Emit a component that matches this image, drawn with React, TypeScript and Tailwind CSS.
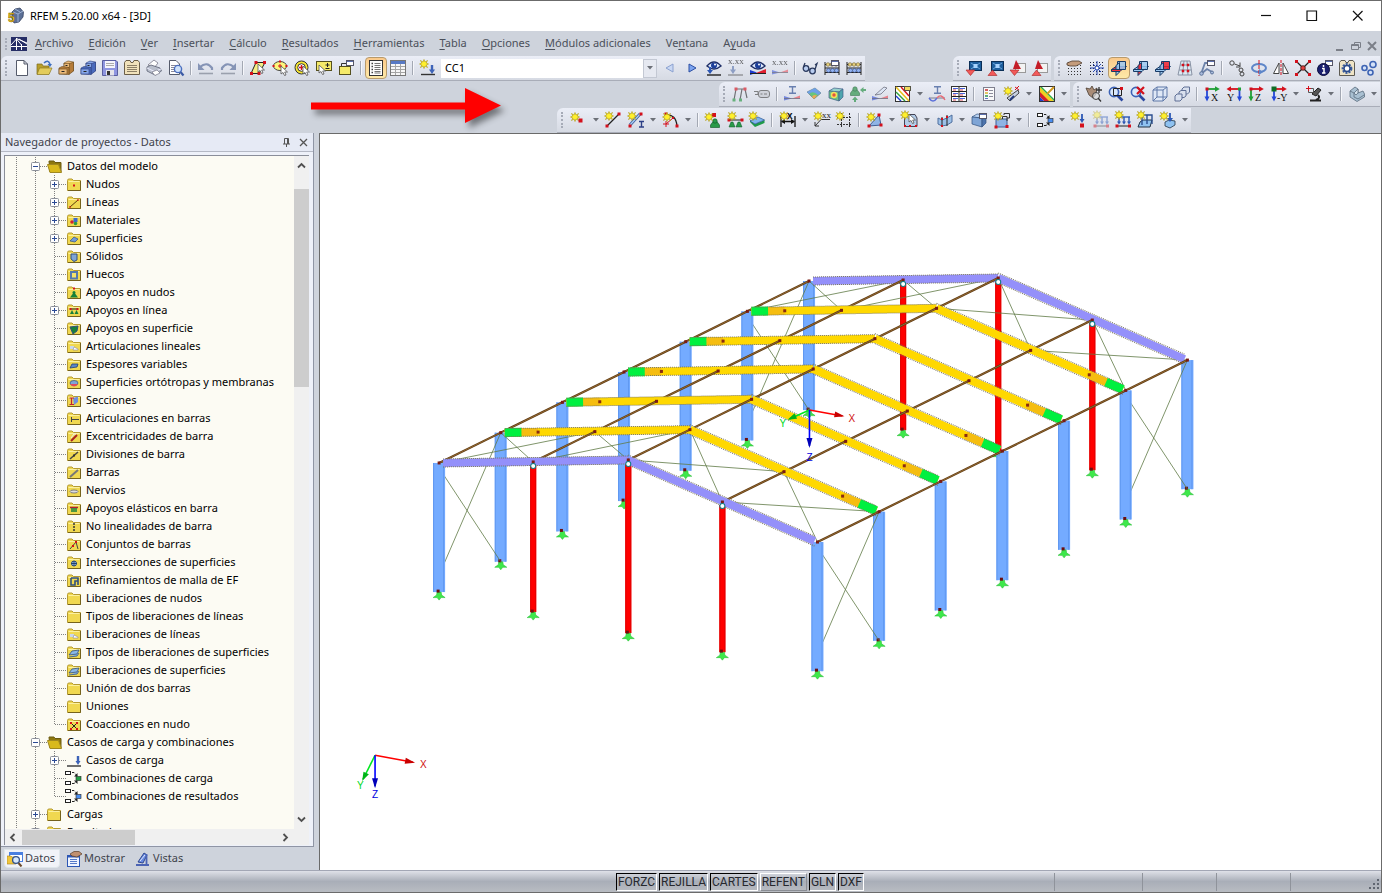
import type { ReactNode } from 'react';

/* ---------- icon parts, all on a 16x16 grid ---------- */

const Star = ({ x = 4, y = 4 }: any) => (
  <path
    transform={`translate(${x} ${y})`}
    d="M0 -4.5L1 -2L3.5 -3.5L2.2 -1L4.5 0L2.2 1L3.5 3.5L1 2L0 4.5L-1 2L-3.5 3.5L-2.2 1L-4.5 0L-2.2 -1L-3.5 -3.5L-1 -2Z"
    fill="#fff02c"
    stroke="#a89410"
    strokeWidth=".6"
  />
);

const Dot = ({ x, y, s = 3, c = '#d4101c' }: any) => (
  <rect x={x - s / 2} y={y - s / 2} width={s} height={s} fill={c} />
);

const Cursor = ({ x = 8, y = 6 }: any) => (
  <path
    transform={`translate(${x} ${y})`}
    d="M0 0V8L2 6.5L3.5 9.5L5 9L3.7 6H6.5Z"
    fill="#fff"
    stroke="#555"
    strokeWidth=".8"
  />
);

const Win = ({ x = 8, y = 0 }: any) => (
  <g transform={`translate(${x} ${y})`}>
    <rect x=".5" y=".5" width="7" height="5" fill="#fff" stroke="#556" />
    <path d="M1 1.5H7" stroke="#5b6fae" />
  </g>
);

const Grid = ({ c = '#333' }: any) => (
  <path
    d="M1 5.5H15M1 8.5H15M1 11.5H15M1 14.5H15M1 2.5H15"
    stroke={c}
    strokeDasharray="1 2"
  />
);

const Support = ({ x = 8, y = 8, c = '#2a9a4a' }: any) => (
  <g transform={`translate(${x} ${y})`}>
    <path d="M-1.500 0H1.500L4.500 4V6.500H-4.500V4Z" fill={c} stroke="#0b5424" strokeWidth=".6" />
    <circle r="2.200" fill={c} stroke="#0b5424" strokeWidth=".6" />
  </g>
);

const Cube = ({ a = '#b9d3f2', b = '#7fa5d6', c = '#4d74ad' }: any) => (
  <g stroke="#31507e" strokeWidth=".7">
    <path d="M1 5L6 2L15 3L11 6Z" fill={a} />
    <path d="M1 5L11 6V15L1 12Z" fill={b} />
    <path d="M11 6L15 3V11L11 15Z" fill={c} />
  </g>
);

const Lens = () => (
  <g>
    <path d="M9 9L14.5 14.5" stroke="#2a47a0" strokeWidth="2.6" />
    <circle cx="6" cy="6" r="4.6" fill="#dbe9fb" stroke="#3b61b5" strokeWidth="1.6" />
  </g>
);

const Eye = () => (
  <g>
    <path d="M1 6Q8 -2 15 6Q8 12 1 6Z" fill="#dce8fb" stroke="#1d2d66" strokeWidth="1.4" />
    <circle cx="8" cy="5.5" r="3" fill="#1d3f9a" />
    <circle cx="9" cy="4.5" r="1" fill="#fff" />
  </g>
);

const Loads = ({ o = 1 }: any) => (
  <g opacity={o}>
    <path d="M2 5H15" stroke="#2c57b5" strokeWidth="1.4" />
    <path d="M4 5V11M9 5V11M14 5V11" stroke="#2c57b5" strokeWidth="1.4" />
    <path d="M2 9.5H6L4 12.5ZM7 9.5H11L9 12.5ZM12 9.5H16L14 12.5Z" fill="#2c57b5" />
    <path d="M1 14H15" stroke="#222" />
    <Dot x={2} y={14} />
    <Dot x={14.5} y={14} />
  </g>
);

const Abacus = () => (
  <g>
    <path d="M1 2V15M15 2V15M1 4.5H15M1 8H15M1 12.5H15" stroke="#222" />
    <g fill="#e6d080" stroke="#5b4a12" strokeWidth=".5">
      <circle cx="4" cy="4.5" r="1.8" />
      <circle cx="8" cy="4.5" r="1.8" />
      <circle cx="12" cy="4.5" r="1.8" />
    </g>
    <g fill="#8fb0f0" stroke="#20366f" strokeWidth=".5">
      <circle cx="4.5" cy="10.5" r="2" />
      <circle cx="8.5" cy="10.5" r="2" />
      <circle cx="12.5" cy="10.5" r="2" />
    </g>
  </g>
);

const Cabinet = ({ a, b, c }: any) => (
  <g stroke={c} strokeWidth=".6">
    <path d="M6 3L10 1L15.5 2V11L11 13H6Z" fill={a} />
    <path d="M11 4L15.5 2V11L11 14.5Z" fill={b} />
    <rect x="6" y="3.5" width="5.5" height="4" fill={a} />
    <path d="M1 8L4 6.5L11 7.5V14.5L1 14Z" fill={b} />
    <rect x="1" y="9" width="8" height="5" fill={a} />
    <path d="M3.5 11.5H6.5M7.5 5.5H9.5" stroke="#222" strokeWidth="1.2" />
  </g>
);

const Planes = ({ square = '#9cc8f0', flat = '#9cc8f0', upright = '#9cc8f0' }: any) => (
  <g stroke="#173a66" strokeLinejoin="round">
    <path d="M.5 9.5L5 6.5H15.5L11 9.5Z" fill={flat} />
    <path d="M6.500 1.500H14.500V9.500H6.500Z" fill={square} fillOpacity=".85" />
    <path d="M5 5.500L8.500 2.500V12L5 15.500Z" fill={upright} fillOpacity=".9" />
    <path d="M.5 9.500H11L9 11.500H.5Z" fill={flat} />
  </g>
);

const Axes = ({ h, v, t, left }: any) => (
  <g>
    {left ? (
      <>
        <path d="M13 3H4" stroke={h} strokeWidth="1.8" />
        <path d="M5 .3V5.7L.5 3Z" fill={h} />
        <path d="M13.5 3V11" stroke={v} strokeWidth="1.8" />
        <path d="M11 10.5H16L13.5 15.5Z" fill={v} />
        <Dot x={13.5} y={3} s={3} c="#1fa03a" />
      </>
    ) : (
      <>
        <path d="M3 3H12" stroke={h} strokeWidth="1.8" />
        <path d="M11 .3V5.7L15.8 3Z" fill={h} />
        <path d="M3 3V11" stroke={v} strokeWidth="1.8" />
        <path d="M.5 10.5H5.5L3 15.5Z" fill={v} />
        <Dot x={3} y={3} s={t === '-Y' ? 5 : 3} c={t === '-Y' ? '#0f6d25' : '#d01020'} />
      </>
    )}
    <text
      x={left ? 1 : t === '-Y' ? 6 : 7}
      y="15"
      fontSize="10"
      fontFamily="Liberation Serif, serif"
      fill="#111"
    >
      {t}
    </text>
  </g>
);

const Combo = ({ c }: any) => (
  <g fill="none" stroke="#222">
    <rect x=".5" y="1.5" width="5" height="3" fill="#fff" />
    <rect x=".5" y="11.5" width="5" height="3" fill="#fff" />
    <path d="M7 2.5H9L12 5.5M7 13.5H9L12 11.5" strokeDasharray="3 1" />
    <path d="M12.500 3V6.500H9ZM12.500 14V10.500H9Z" fill="#222" stroke="none" />
    <rect x="11" y="6.500" width="5" height="4" fill={c} strokeWidth=".6" />
  </g>
);

const RedBlue = () => (
  <g>
    <path d="M0 10V14.500L8 12.500Z" fill="#5a70dc" />
    <path d="M8 12.500L16 9.500V12.500Z" fill="#ea6a74" />
    <path d="M0 12.500H16" stroke="#556" strokeWidth=".8" />
  </g>
);

const IBeam = ({ x = 5, y = 1, c = '#4a66a0' }: any) => (
  <path transform={`translate(${x} ${y})`} d="M0 .7H7M3.5 0V7M0 7.2H7" stroke={c} strokeWidth="1.4" />
);

const icons: Record<string, ReactNode> = {
  nuevo: <path d="M2.5.5H10L13.5 4V15.5H2.5ZM10 .5V4H13.5" fill="#fff" stroke="#555b6b" />,
  abrir: (
    <>
      <path d="M1 4H6L7 6H13V14H1Z" fill="#b89f2a" stroke="#7d6c1c" strokeWidth=".7" />
      <path d="M3.5 8H16L13 14.5H1Z" fill="#e3cc5c" stroke="#8c7a24" strokeWidth=".7" />
      <path d="M8 3Q12 -1 14 4" fill="none" stroke="#3e6fc0" strokeWidth="1.6" />
      <path d="M11.5 4H16L14 7Z" fill="#3e6fc0" />
    </>
  ),
  cajonMarron: <Cabinet a="#eab878" b="#b57c3a" c="#6a4a1c" />,
  cajonAzul: <Cabinet a="#86a6e8" b="#4a6abc" c="#2a3c7c" />,
  guardar: (
    <>
      <path d="M.5.5H14L15.5 2V15.5H.5Z" fill="#8f96e0" stroke="#5a5f9f" />
      <rect x="3" y="1" width="10" height="7" fill="#f5f5fb" />
      <path d="M4 3.5H12M4 5.5H12" stroke="#aaa" />
      <rect x="4" y="10" width="8" height="5.5" fill="#e4e4ea" />
      <rect x="5" y="11" width="3" height="4" fill="#333" />
    </>
  ),
  informe: (
    <>
      <path d="M.5 2.5L2 .5H6L7 2.5H9L10 .5H14L15.5 2.5V14.5H.5Z" fill="#f1e2bb" stroke="#6b5e48" />
      <path d="M3 5.5H13M3 7.5H13M3 9.5H13M3 11.5H13" stroke="#8c7f66" />
    </>
  ),
  imprimir: (
    <>
      <path d="M2 5L8 0L12 3L8 8Z" fill="#fff" stroke="#778" strokeWidth=".8" />
      <path d="M1 7L5 5L14 8L15.5 11L9 15L1 11Z" fill="#b9bfcc" stroke="#5a6072" strokeWidth=".8" />
      <path d="M1 8L8.5 11.5L15 9" fill="none" stroke="#eef" />
      <path d="M6 12L11 10L14 13L9 15.5Z" fill="#fff" stroke="#778" strokeWidth=".7" />
    </>
  ),
  previa: (
    <>
      <path d="M1.5.5H8L11.5 4V14.5H1.5Z" fill="#fff" stroke="#555b6b" />
      <path d="M3 5.5H9M3 7.5H8M3 9.5H7M3 11.5H7" stroke="#889" />
      <circle cx="10" cy="9" r="3.6" fill="#cfe2fa" stroke="#4a6ec0" strokeWidth="1.4" />
      <path d="M12.5 12L15.5 15.5" stroke="#3b5aa5" strokeWidth="2.2" />
    </>
  ),
  deshacer: (
    <>
      <path d="M2 7Q9 1 14 8V10" fill="none" stroke="#8594b6" strokeWidth="2.2" />
      <path d="M0 3V10H6.5Z" fill="#8594b6" />
      <path d="M1 13.5H15" stroke="#9aa0ad" strokeWidth="1.6" />
    </>
  ),
  rehacer: (
    <>
      <path d="M14 7Q7 1 2 8V10" fill="none" stroke="#8594b6" strokeWidth="2.2" />
      <path d="M16 3V10H9.5Z" fill="#8594b6" />
      <path d="M1 13.5H15" stroke="#9aa0ad" strokeWidth="1.6" />
    </>
  ),
  selPlano: (
    <>
      <path d="M6 2.5H15L9 13.5H1Z" fill="#f5ee85" stroke="#222" />
      <Dot x={6} y={2.5} /><Dot x={14.5} y={2.5} /><Dot x={1.5} y={13.5} /><Dot x={9} y={13.5} />
      <Cursor x={8} y={4} />
    </>
  ),
  selElipse: (
    <>
      <ellipse cx="8" cy="6" rx="6.500" ry="4.5" fill="#fdf57c" stroke="#444" />
      <path d="M8 4V8M6 6H10" stroke="#d4101c" />
      <Dot x={8} y={1.5} s={2} /><Dot x={1.5} y={6} s={2} /><Dot x={14.5} y={6} s={2} />
      <Cursor x={9} y={6} />
    </>
  ),
  selAnillo: (
    <>
      <circle cx="7.5" cy="7.5" r="6.5" fill="#f8e830" stroke="#333" />
      <circle cx="7.5" cy="7.5" r="3.8" fill="#fff" stroke="#333" />
      <path d="M7.5 5V10M5 7.5H10" stroke="#d4101c" strokeWidth="1.4" />
      <Cursor x={9} y={6} />
    </>
  ),
  selMasMenos: (
    <>
      <rect x=".5" y="1.5" width="15" height="9" fill="#f5ea6a" stroke="#55501e" />
      <path d="M11.5 3V7M9.5 5H13.5M9.5 8.5H13.5" stroke="#222" />
      <Cursor x={3} y={5} />
    </>
  ),
  selVentana: (
    <>
      <rect x="1.5" y="6.5" width="11" height="8" fill="#f5ea6a" stroke="#55501e" />
      <path d="M3.500 6V3.500H8" stroke="#333" fill="none" />
      <Win x={8} y={0} />
    </>
  ),
  navegador: (
    <>
      <rect x="1.500" y=".5" width="13" height="15" fill="#fff" stroke="#333" />
      <path d="M3.500 3.5H5M3.500 6.5H5M3.500 9.5H5M3.500 12.5H5" stroke="#444" strokeWidth="1.400" />
      <path d="M6.500 3.5H12.500M6.500 5.5H12.500M6.500 7.5H12.500M6.500 9.5H12.500M6.500 11.5H12.500M6.500 13H12.500" stroke="#777" />
    </>
  ),
  tabla: (
    <>
      <rect x=".5" y=".5" width="15" height="15" fill="#f7f7f7" stroke="#777" />
      <rect x="1" y="1" width="14" height="3" fill="#5779c4" />
      <path d="M1 6.5H15M1 9.5H15M1 12.5H15M5.5 4V15M10.5 4V15" stroke="#a5a5a5" />
    </>
  ),
  nuevoCaso: (
    <>
      <Star />
      <path d="M12 5V10" stroke="#3d63b8" strokeWidth="2.4" />
      <path d="M9 9.5H15L12 14Z" fill="#3d63b8" />
      <path d="M1 14.5H15" stroke="#333" strokeWidth="1.4" />
    </>
  ),
  anterior: <path d="M11 4V12L4 8Z" fill="#c9d8f4" stroke="#8ba1d0" />,
  siguiente: <path d="M5 4V12L12 8Z" fill="#7ba4f0" stroke="#2c4fa3" />,
  verCarga: (
    <>
      <Eye />
      <path d="M4 7V12" stroke="#2c57b5" strokeWidth="2" />
      <path d="M1 10H7L4 14Z" fill="#2c57b5" />
      <path d="M1 15H15" stroke="#222" strokeWidth="1.4" />
    </>
  ),
  valorCarga: (
    <g opacity=".7">
      <text x="0" y="4" fontSize="9" fontFamily="Liberation Serif, serif" fill="#222">x.xx</text>
      <path d="M5 6V11" stroke="#6c83b5" strokeWidth="2" />
      <path d="M2 9.5H8L5 14Z" fill="#6c83b5" />
      <path d="M0 15H15" stroke="#444" />
    </g>
  ),
  verResultado: (
    <>
      <Eye />
      <path d="M0 10V15L7 12.5Z" fill="#1d3bd0" />
      <path d="M6 13L16 9V14Z" fill="#e02030" />
      <path d="M0 13.500H16" stroke="#222" />
    </>
  ),
  valorResultado: (
    <g opacity=".7">
      <text x="0" y="5" fontSize="9" fontFamily="Liberation Serif, serif" fill="#222">x.xx</text>
      <RedBlue />
    </g>
  ),
  gafas: (
    <g fill="#b9cdf0" stroke="#2b3a5e" strokeWidth="1.3">
      <circle cx="4" cy="8.5" r="2.8" />
      <circle cx="10.5" cy="11" r="2.8" />
      <path d="M6.5 9L8 9.5M1.5 7L3 3M13 9.5L15 3.5L13 5" fill="none" />
    </g>
  ),
  calcTodo: <><Abacus /><Win x={7} y={0} /></>,
  calc: <Abacus />,
  flechaAzul1: (
    <>
      <rect x="3.5" y="1.5" width="12" height="9" fill="#1e5f9e" stroke="#0b2f57" />
      <path d="M5 3L14 9M14 3L5 9" stroke="#7db4e6" strokeWidth=".8" />
      <Dot x={9.5} y={6} s={4} c="#a8d4ff" />
      <path d="M0 10H9L4.500 15.500Z" fill="#f25a5a" stroke="#a82424" strokeWidth=".6" />
    </>
  ),
  flechaAzul2: (
    <>
      <rect x="3.5" y="1.5" width="12" height="9" fill="#1e5f9e" stroke="#0b2f57" />
      <path d="M5 3L14 9M14 3L5 9" stroke="#7db4e6" strokeWidth=".8" />
      <Dot x={9.5} y={6} s={4} c="#a8d4ff" />
      <path d="M0 15.5H9L4.5 10Z" fill="#f25a5a" stroke="#a82424" strokeWidth=".6" />
    </>
  ),
  pdfBajar: (
    <>
      <rect x="5.5" y="3.5" width="10" height="9" fill="#f3f3f3" stroke="#999" />
      <path d="M6 0L11 9L3 9Z" fill="#c41c28" />
      <path d="M0 10H9L4.500 15.500Z" fill="#f25a5a" stroke="#a82424" strokeWidth=".6" />
    </>
  ),
  pdfSubir: (
    <>
      <rect x="5.5" y="3.5" width="10" height="9" fill="#f3f3f3" stroke="#999" />
      <path d="M6 0L11 9L3 9Z" fill="#c41c28" />
      <path d="M0 15.5H9L4.5 10Z" fill="#f25a5a" stroke="#a82424" strokeWidth=".6" />
    </>
  ),
  rejillaMano: (
    <>
      <Grid />
      <path d="M0 3L5 1L12 1L15 3L9 6H3L0 5Z" fill="#c49c7c" stroke="#4f3d30" strokeWidth=".8" />
    </>
  ),
  rejillaMira: (
    <>
      <Grid c="#223" />
      <path d="M8 1V15M1 8H15M4 4L12 12M12 4L4 12" stroke="#2648b5" />
      <circle cx="8" cy="8" r="2" fill="#fff" stroke="#2648b5" />
    </>
  ),
  plano1: <Planes flat="#f0303c" />,
  plano2: <Planes upright="#f0303c" />,
  plano3: <Planes square="#f0202c" />,
  malla: (
    <>
      <path d="M4 1H13L15 15H1Z" fill="#dbe8f2" stroke="#8a93a5" />
      <path d="M7 1L5.500 15M10 1L11 15M3 5H14M2 10H14.500" stroke="#8a93a5" />
      <Dot x={6} y={5} s={2.5} /><Dot x={11} y={5} s={2.5} /><Dot x={6} y={11} s={2.5} /><Dot x={11} y={11} s={2.5} />
    </>
  ),
  lineasVentana: (
    <>
      <path d="M2 14L6 3H9M2 14L8 9L13 12" fill="none" stroke="#6c82aa" strokeWidth="1.800" />
      <circle cx="2.500" cy="13.500" r="1.800" fill="#a9bbdc" stroke="#5c7298" />
      <circle cx="13" cy="12.500" r="1.500" fill="#a9bbdc" stroke="#5c7298" />
      <Win x={8} y={0} />
    </>
  ),
  mover: (
    <g fill="none" stroke="#444">
      <circle cx="3" cy="3" r="2.2" />
      <circle cx="12" cy="10" r="2" />
      <circle cx="13" cy="14" r="2" />
      <path d="M5.500 4L11 6M11 2.500V7H7" />
    </g>
  ),
  girar: (
    <>
      <ellipse cx="8" cy="8" rx="7" ry="4" fill="none" stroke="#5e86c9" strokeWidth="2" />
      <path d="M8 0V16" stroke="#d4101c" strokeDasharray="4 1" />
      <path d="M8 9V15L12 12Z" fill="#5e86c9" />
    </>
  ),
  simetria: (
    <>
      <path d="M6 3V13.500H.500ZM10 3V13.500H15.500Z" fill="#fff" stroke="#444" />
      <path d="M8 0V16" stroke="#d4101c" strokeDasharray="3 1" />
    </>
  ),
  nodos: (
    <>
      <path d="M2 2L14 14M14 2L2 14" stroke="#222" strokeWidth="1.3" />
      <Dot x={1.5} y={1.5} /><Dot x={14.5} y={1.5} /><Dot x={1.5} y={14.5} /><Dot x={14.5} y={14.5} />
      <circle cx="8" cy="8" r="2.300" fill="#e24040" stroke="#411" strokeWidth=".8" />
    </>
  ),
  info: (
    <>
      <Win x={8} y={0} />
      <circle cx="6.500" cy="9.500" r="6" fill="#1a1f6e" stroke="#0a0d3a" />
      <path d="M6.500 5V7M5 8.500H7V13M5 13H8.500" stroke="#fff" strokeWidth="1.500" fill="none" />
    </>
  ),
  ajustes: (
    <>
      <path d="M.500 2.500L2 .500H6L7 2.500H9L10 .500H14L15.500 2.500V15.500H.500Z" fill="#efe4c6" stroke="#5d5a52" />
      <circle cx="8" cy="8.500" r="4.200" stroke="#3a5c9c" strokeWidth="2.400" strokeDasharray="2 1" />
      <circle cx="8" cy="8.500" r="3" fill="#fff" stroke="#2c4c8c" strokeWidth="1.500" />
    </>
  ),
  engranajes: (
    <g fill="#d5e2f8" stroke="#3f65b4" strokeWidth="1.600">
      <circle cx="3.500" cy="8" r="2.500" />
      <circle cx="12" cy="4.500" r="3" />
      <circle cx="9.500" cy="12.500" r="2.500" />
    </g>
  ),
  portico: (
    <g opacity=".65">
      <path d="M2 14L4 3H13L15 12M8 14L10 3" fill="none" stroke="#333" strokeWidth="1.200" />
      <Dot x={4} y={3} /><Dot x={13} y={3} /><Dot x={2} y={14} c="#2a9a44" /><Dot x={8.500} y={14} c="#2a9a44" />
    </g>
  ),
  camara: (
    <g opacity=".7">
      <rect x="4.500" y="4.500" width="11" height="7" rx="2.500" fill="#c9cbd2" stroke="#555" />
      <path d="M0 5.500H4V8.500H1M6.500 8H8.500M10 8H13" stroke="#555" fill="none" />
    </g>
  ),
  resBarras: <g opacity=".8"><IBeam x={5} y={0} /><RedBlue /></g>,
  isosuperficie: (
    <g opacity=".85">
      <path d="M1 6L9 2L15 7L8 13Z" fill="#55c06a" stroke="#556" strokeWidth=".600" />
      <path d="M1 6L9 2L15 7L12 9Q7 4 3 8Z" fill="#5a94e8" />
      <path d="M6 11Q7 8 11 9.500L8 13Z" fill="#f0a03c" />
    </g>
  ),
  isosolido: (
    <g opacity=".9">
      <Cube a="#8fd0c8" b="#62c07a" c="#3f9fa8" />
      <circle cx="6" cy="9" r="3.200" fill="#f6e14a" />
      <circle cx="6" cy="9" r="1.700" fill="#e4452c" />
    </g>
  ),
  reacciones: (
    <g opacity=".75">
      <Support x={5} y={3} c="#3c9a58" />
      <path d="M16 4H13M5 16V13" stroke="#3c9a58" strokeWidth="2" />
      <path d="M13.500 1V7L10 4ZM2 14H8L5 10.500Z" fill="#3c9a58" />
    </g>
  ),
  secciones: (
    <g opacity=".8">
      <path d="M3 9L12 1L15 2L9 8Z" fill="#dbe5f5" stroke="#445" strokeWidth=".700" />
      <RedBlue />
    </g>
  ),
  escala: (
    <>
      <rect x=".500" y=".500" width="14" height="15" fill="#fff" stroke="#333" />
      <path d="M1 1L14 15" stroke="#e8c020" strokeWidth="1.600" />
      <path d="M1 6L10 15" stroke="#30a040" strokeWidth="1.400" />
      <path d="M6 1L14 10" stroke="#d4101c" strokeWidth="1.400" />
      <path d="M1 10L6 15" stroke="#2040d0" strokeWidth="1.400" />
      <rect x="9.500" y=".500" width="6" height="4" fill="#f3dc60" stroke="#554" />
    </>
  ),
  deformada: (
    <g opacity=".8">
      <IBeam x={5} y={0} />
      <path d="M0 12H16" stroke="#445" strokeWidth=".800" />
      <path d="M0 12Q4 18 8 12" fill="none" stroke="#3b54d6" strokeWidth="1.400" />
      <path d="M8 12Q12 7 16 14" fill="none" stroke="#e8525e" strokeWidth="1.400" />
    </g>
  ),
  panelValores: (
    <>
      <rect x=".500" y=".500" width="15" height="15" fill="#fff" stroke="#333" />
      <path d="M8 1V15M1 5.500H15M1 10.500H15" stroke="#222" />
      <path d="M2 2.500H7M9 2.500H14M2 7.500H7M9 7.500H14M2 12.500H7M9 12.500H14" stroke="#4a64dc" />
      <path d="M2 4H5M9 4H12M2 9H5M9 9H12M2 14H5M9 14H12" stroke="#d44a54" />
    </>
  ),
  listaColor: (
    <g opacity=".8">
      <rect x="2.500" y="1.500" width="11" height="13" fill="#fff" stroke="#667" />
      <path d="M4 4H7" stroke="#d04040" strokeWidth="2" />
      <path d="M4 7H7" stroke="#e0c040" strokeWidth="2" />
      <path d="M4 10H7" stroke="#40a060" strokeWidth="2" />
      <path d="M4 12.500H7" stroke="#4060c0" />
      <path d="M8 4.500H12M8 7.500H12M8 10.500H12" stroke="#778" />
    </g>
  ),
  varita: (
    <>
      <path d="M3 12L14 4L15 7L6 15Z" fill="#c9d2e0" stroke="#333" strokeWidth=".900" />
      <path d="M6 14L10 10" stroke="#223a80" strokeWidth="2" />
      <Star x={4} y={5} />
      <path d="M11 1L15 4M15 0L11 4" stroke="#d4101c" />
    </>
  ),
  colores: (
    <>
      <rect x=".500" y=".500" width="15" height="15" fill="#fff" stroke="#333" />
      <path d="M1 1L15 15H9L1 7Z" fill="#f0d020" />
      <path d="M1 1H3L15 13V15Z" fill="#2fae45" />
      <path d="M1 6V11L5 15H10Z" fill="#d4202c" />
      <path d="M1 11V15H5Z" fill="#2440c8" />
      <path d="M8 8L15 1" stroke="#d09a20" strokeWidth="2" />
    </>
  ),
  manoZoom: (
    <>
      <path d="M0 2L4 3L6 0L8 4L11 2L10 8L7 12L3 9Z" fill="#a98c77" stroke="#4b3d32" strokeWidth=".800" />
      <circle cx="10" cy="10" r="3.500" fill="#d9d9d9" fillOpacity=".700" stroke="#444" />
      <path d="M12 12L15 15.500M13 1V7M10 4H16" stroke="#333" strokeWidth="1.300" />
    </>
  ),
  zoomVentana: <><Lens /><path d="M5.500 2.500H13.500V9.500H5.500Z" fill="none" stroke="#222" /><Dot x={13.5} y={2.5} /></>,
  zoomTodo: <><Lens /><path d="M7 1L14 8M14 1L7 8" stroke="#d4101c" strokeWidth="2.200" /></>,
  cubo: (
    <g fill="#dfe8f6" stroke="#5f78a8">
      <path d="M1 4L5 1H15V11L11 15H1Z" />
      <path d="M1 4H11V15M11 4L15 1M5 1V11H15M5 11L1 15" fill="none" />
    </g>
  ),
  cubos: (
    <g fill="#d9e0ee" stroke="#5f6f95">
      <path d="M8 3L10 1H15.500V6L13.500 8H8Z" />
      <path d="M5 6L7 4.500H12V10L10 11.500H5Z" />
      <path d="M1 10L3 8H8V13L6 15H1Z" />
    </g>
  ),
  ejeX: <Axes h="#1f9f36" v="#2448d8" t="X" />,
  ejeY: <Axes h="#d4101c" v="#2448d8" t="Y" left />,
  ejeZ: <Axes h="#d4101c" v="#1f9f36" t="Z" />,
  ejeMenosY: <Axes h="#d4101c" v="#2448d8" t="-Y" />,
  microscopio: (
    <>
      <path d="M6 8L12 2L15 4L10 10Z" fill="#555" stroke="#222" />
      <path d="M4 14.500H15M12 9Q15 12 10 14" stroke="#222" strokeWidth="2" fill="none" />
      <path d="M2.500 2.500H7.500V6.500H2.500Z" fill="none" stroke="#555" />
      <path d="M0 2.500H5M2.500 0V5" stroke="#d4101c" />
    </>
  ),
  perfil3d: (
    <g stroke="#5a6c7e" strokeWidth=".800">
      <path d="M1 5L6 1L9 3V7L14 5L15.500 8V11L8 15.500L1 11Z" fill="#a9c0d2" />
      <path d="M1 5L5 7V11L9 13L15 9" fill="none" />
      <path d="M5 7L9 3V7L7 9Z" fill="#d5e2ec" />
    </g>
  ),
  nudo: <><Star x={4} y={5} /><Dot x={9.5} y={8.5} s={4} /></>,
  linea: <><path d="M2 14L14 2" stroke="#222" strokeWidth="1.300" /><Dot x={14} y={2} /><Dot x={2} y={14} /><Star x={4} y={4} /></>,
  barra: (
    <>
      <path d="M2 13L12 2" stroke="#3a5a9a" strokeWidth="3" />
      <path d="M2 13L12 2" stroke="#a9cdf5" strokeWidth="1.300" />
      <Dot x={13} y={2} /><Dot x={2} y={14} /><Star x={4} y={4} />
      <path d="M11 9.500H16M13.500 9V15M11 15H16" stroke="#2c3f86" strokeWidth="1.400" />
    </>
  ),
  arco: (
    <>
      <path d="M3 3Q13 2 14 14" fill="none" stroke="#222" strokeWidth="1.300" />
      <path d="M3 12L10 6M0 12H6M3 9V15" stroke="#d4101c" />
      <Dot x={3} y={2} /><Dot x={10} y={6} s={2} /><Dot x={14} y={14} /><Star x={4} y={5} />
    </>
  ),
  apoyoNudo: <><Support x={10} y={9} /><Dot x={9} y={3} s={4} /><Star x={4} y={5} /></>,
  apoyoLinea: (
    <>
      <path d="M2 8H14" stroke="#222" /><Dot x={15} y={8} /><Dot x={2} y={8} />
      <path d="M4 10H6L8 15H2ZM11 10H13L15 15H9Z" fill="#2a9a4a" stroke="#0b5424" strokeWidth=".500" />
      <Star x={5} y={4} />
    </>
  ),
  apoyoSuperficie: (
    <>
      <path d="M1 10L6 15L15.500 11V8L6 12L1 8Z" fill="#1f9a4a" />
      <path d="M1 9L9 5L15.500 8L6 12Z" fill="#7fb4ee" stroke="#2c5590" strokeWidth=".700" />
      <Star x={4} y={4} />
    </>
  ),
  cota: (
    <>
      <path d="M1 4V15M15 4V15M2 9.500H14" stroke="#111" strokeWidth="1.300" />
      <path d="M1 9.500L5 7V12ZM15 9.500L11 7V12Z" fill="#111" />
      <Star x={4} y={4} />
      <text x="7" y="7" fontSize="10" fontWeight="bold" fontFamily="Liberation Sans, sans-serif" fill="#111">x</text>
    </>
  ),
  comentario: (
    <>
      <path d="M1 14L7 7.500H16M1 10V14H5" fill="none" stroke="#333" />
      <Star x={4} y={4} />
      <text x="8" y="6" fontSize="9" fontFamily="Liberation Serif, serif" fill="#222">xx</text>
    </>
  ),
  lineaGuia: <><path d="M5.500 1V16M13.500 1V16M1 5.500H16M1 12.500H16" stroke="#333" strokeDasharray="2 1" /><Star x={4} y={4} /></>,
  superficie: (
    <>
      <path d="M12 3L14 13L2 14Z" fill="#8fb4e6" stroke="#3f5f96" />
      <Dot x={12} y={3} /><Dot x={14} y={13} /><Dot x={2} y={14} /><Star x={4} y={5} />
    </>
  ),
  seleccionar: (
    <>
      <path d="M2.500 2.500H13L15 6V14.500H2.500Z" fill="#b3cce8" stroke="#445" />
      <Dot x={3} y={14} s={2} /><Dot x={8} y={14} s={2} /><Dot x={14} y={14} s={2} />
      <Cursor x={7} y={2} /><Star x={3} y={3} />
    </>
  ),
  interseccion: (
    <>
      <path d="M1 6L5 8L10 6L15 3V10L10 13L5 14L1 12Z" fill="#9cc0e8" stroke="#4f6f9e" />
      <path d="M5 5V15M10 3V14" stroke="#222" />
      <Dot x={5} y={7} s={2} /><Dot x={10} y={5} s={2} /><Dot x={5} y={14} s={2} />
    </>
  ),
  solido: <><Cube /><Win x={8} y={1} /></>,
  solidos: (
    <>
      <rect x="2" y="7" width="11" height="8" fill="#8fb4e4" stroke="#3f5f96" />
      <path d="M8.500 4.500H13V9M8.500 4.500V7M10 3V1.500H15.500V6H13" fill="none" stroke="#333" />
      <Dot x={2} y={15} /><Dot x={13} y={14.500} /><Star x={4} y={4} />
    </>
  ),
  combinacion: <Combo c="#4a8ef0" />,
  cargaNudo: (
    <>
      <Star x={4} y={4} />
      <path d="M11 2V8" stroke="#2c57b5" strokeWidth="1.800" />
      <path d="M8.500 7H13.500L11 11Z" fill="#2c57b5" /><Dot x={11} y={13.500} s={4} />
    </>
  ),
  cargaLinea: <g opacity=".450"><Loads /><Star x={4} y={3} /></g>,
  cargaBarra: <><Loads /><Star x={4} y={3} /></>,
  cargaSuperficie: (
    <>
      <path d="M3 10L6 8H15L13 15H1Z" fill="#8fc2f0" stroke="#234" />
      <path d="M5 3H15V12M5 3V13M10 3V12" stroke="#2c4f90" strokeWidth="1.400" fill="none" />
      <Star x={4} y={3} />
    </>
  ),
  cargaSolido: (
    <>
      <path d="M5 10L9 8L15 9V13L10 16L5 14Z" fill="#8fc2f0" stroke="#234" strokeWidth=".800" />
      <path d="M10 1V7" stroke="#2c57b5" strokeWidth="1.800" />
      <path d="M7 6H13L10 10Z" fill="#2c57b5" /><Star x={4} y={4} />
    </>
  ),
};

const Icon = ({ name }: any) => (
  <svg viewBox="0 0 16 16" className="h-4 w-4 shrink-0 overflow-visible" fill="none" aria-hidden="true">
    {icons[name]}
  </svg>
);

/* ---------- toolbars ---------- */

const ToolButton = ({ name, active }: any) => (
  <button
    aria-label={name}
    className={
      active
        ? 'flex h-[22px] w-[22px] items-center justify-center rounded-sm border border-[#b79a6c] bg-linear-to-b from-[#fbc98a] to-[#fde9a8]'
        : 'flex h-[22px] w-[22px] items-center justify-center'
    }
  >
    <Icon name={name} />
  </button>
);

const Separator = () => <span className="mx-[3px] h-[14px] w-[2px] border-l border-[#a3a8b3] bg-[#f6f7fb]" />;

// '|' is a separator, a trailing 'v' after ':' gives a drop-down arrow, ':on' a pressed button
const Tools = ({ items }: { items: string }) => (
  <>
    {items.split(' ').map((item, i) => {
      if (item === '|') return <Separator key={i} />;
      const [name, flag] = item.split(':');
      if (flag === 'v')
        return (
          <span key={i} className="flex w-[35px] items-center pl-px">
            <ToolButton name={name} />
            <button aria-label={`${name} opciones`} className="flex h-[22px] w-3 items-center justify-center">
              <svg viewBox="0 0 6 4" className="h-1 w-1.5" aria-hidden="true">
                <path d="M0 0H6L3 3.500Z" fill="#6c7078" />
              </svg>
            </button>
          </span>
        );
      return <ToolButton key={i} name={name} active={flag === 'on'} />;
    })}
  </>
);

const Toolbar = ({ children }: any) => (
  <div
    role="toolbar"
    className="flex h-[25px] items-center rounded-tl-md border-b border-[#a9adb8] bg-linear-to-b from-[#ebeef7] to-[#d6dae3]"
  >
    <span className="ml-1 mr-1 h-4 border-l-2 border-dotted border-[#a6abb7]" />
    {children}
  </div>
);

const menus = [
  '&Archivo', '&Edición', '&Ver', '&Insertar', '&Cálculo', '&Resultados', '&Herramientas',
  '&Tabla', '&Opciones', '&Módulos adicionales', 'Ve&ntana', 'A&yuda',
];

const MenuBar = () => (
  <div className="flex h-[25px] items-center pl-1">
    <span className="mr-1 h-3 border-l-2 border-dotted border-[#a6abb7]" />
    <svg viewBox="0 0 16 14" className="h-3.5 w-4" aria-hidden="true">
      <rect width="16" height="14" fill="#262e66" />
      <path d="M0 9.500H16M5.500 1V13M10.500 7V13M5.500 2L0 8M5.500 2L10.500 8M8 2L16 7M5.500 1.500L16 6" stroke="#fff" fill="none" />
    </svg>
    <nav className="ml-2 flex gap-[15px] text-[11px] text-[#4b505a]">
      {menus.map((m) => {
        const [before, rest] = m.split('&');
        return (
          <button key={m} className="whitespace-nowrap">
            {before}
            <span className="underline underline-offset-2">{rest[0]}</span>
            {rest.slice(1)}
          </button>
        );
      })}
    </nav>
    <div className="mt-1 mr-1 ml-auto flex items-end gap-1.5 text-[#7b7f88]">
      <button aria-label="Minimizar 3D">
        <svg viewBox="0 0 10 10" className="h-2.5 w-2.5"><path d="M1 9H8" stroke="currentColor" strokeWidth="2" /></svg>
      </button>
      <button aria-label="Restaurar 3D">
        <svg viewBox="0 0 10 10" className="h-2.5 w-2.5" fill="none" stroke="currentColor">
          <path d="M3.500 3V1.500H9.500V6.500H8" /><path d="M.500 3.500H7.500V8.500H.500ZM.500 4.500H7.500" />
        </svg>
      </button>
      <button aria-label="Cerrar 3D">
        <svg viewBox="0 0 10 10" className="h-2.5 w-2.5"><path d="M1 1L9 9M9 1L1 9" stroke="currentColor" strokeWidth="2" /></svg>
      </button>
    </div>
  </div>
);

const TitleBar = () => (
  <div className="flex h-[30px] items-center bg-white pl-[7px]">
    <svg viewBox="0 0 16 16" className="h-4 w-4 overflow-visible" aria-hidden="true">
      <path d="M4 4L7 1L12 0L15.500 4L15 9L11 14L6 15L4 11Z" fill="#5c7096" stroke="#2c3a58" strokeWidth=".700" />
      <path d="M5 4L10 6L15 3M10 6V14M7 1L12 4" stroke="#9fb3d6" fill="none" />
      <text x="0" y="14" fontSize="12" fontWeight="bold" fontFamily="Liberation Sans, sans-serif" fill="#f2c81e" stroke="#6a5200" strokeWidth=".500">5</text>
    </svg>
    <h1 className="ml-1.5 text-[11px] text-black">RFEM 5.20.00 x64 - [3D]</h1>
    <div className="ml-auto flex">
      {['M1 5.500H11', 'M1 1H10.500V10.500H1Z', 'M1 1L10.500 10.500M10.500 1L1 10.500'].map((d, i) => (
        <button key={d} aria-label={['Minimizar', 'Maximizar', 'Cerrar'][i]} className="flex w-[46px] justify-center">
          <svg viewBox="0 0 12 12" className="h-3 w-3" fill="none" stroke="#111" strokeWidth="1.200"><path d={d} /></svg>
        </button>
      ))}
    </div>
  </div>
);

/* ---------- project navigator ---------- */

const marks: Record<string, ReactNode> = {
  punto: <Dot x={7} y={7.5} s={2} />,
  linea: <><path d="M3 11L11 4" stroke="#5a3c0c" /><Dot x={11} y={4} s={1.5} /><Dot x={3} y={11} s={1.5} /></>,
  materiales: <><circle cx="5" cy="8" r="1.800" fill="#d4202c" /><rect x="6.500" y="4" width="4" height="4" fill="#3a6ad0" /><circle cx="8.500" cy="9.500" r="1.800" fill="#2a9a44" /></>,
  superficie: <path d="M3 9L7 5L11 7L8 10Z" fill="#6f9bdb" stroke="#2f4f86" strokeWidth=".700" />,
  solido: <path d="M4 4H10V10L7 11.500L4 9Z" fill="#7fa5d6" stroke="#31507e" />,
  hueco: <path d="M4 4H10V10.500H4Z" fill="#f4e26a" stroke="#5579ad" strokeWidth="2" />,
  apoyo: <><circle cx="7" cy="6.500" r="1.500" fill="#16813a" /><path d="M7 6L11 11.500H3Z" fill="#16813a" /><Dot x={7} y={2.500} s={2} /></>,
  apoyoLinea: <><path d="M4 5H10" stroke="#222" /><path d="M5 6L3 10H7ZM9.500 6L7.500 10H11.500Z" fill="#16813a" /><Dot x={3.500} y={5} s={2} /><Dot x={10.500} y={5} s={2} /></>,
  apoyoSup: <path d="M3 5L11 4L10 9L6 12Z" fill="#16813a" stroke="#31507e" />,
  articulacion: <><rect x="3" y="6" width="4" height="3" fill="#c9d6ea" /><path d="M7 7L11 9L11 10H6Z" fill="#fff" stroke="#889" strokeWidth=".600" /></>,
  espesor: <path d="M3 10L5 6H11L10 9Z" fill="#5a86c9" stroke="#22406f" strokeWidth=".800" />,
  orto: <><ellipse cx="7" cy="7" rx="4" ry="2.500" fill="#7fa5d6" stroke="#31507e" strokeWidth=".700" /><path d="M3 8Q7 13 11 8Z" fill="#e04a5a" /></>,
  seccion: <><path d="M6 4L11 2.500V8L7 11Z" fill="#6f8fe0" /><path d="M2.500 4H7M4.500 4V10.500M2.500 10.500H7" stroke="#c02030" strokeWidth="1.200" /></>,
  artBarra: <path d="M5 7.500H12M4.500 5V10" stroke="#444" />,
  exc: <><path d="M4 11L10 5" stroke="#a22" strokeWidth="2" /><path d="M4 8L7 4H9" stroke="#eee" fill="none" /></>,
  division: <><path d="M3 11L11 4" stroke="#444" strokeWidth="1.500" /><Dot x={7} y={7.500} s={2} c="#333" /></>,
  barra: <path d="M3 11L11 4" stroke="#777" strokeWidth="2" />,
  nervio: <ellipse cx="7" cy="7.500" rx="4" ry="1.500" fill="#ddd" stroke="#667" strokeWidth=".800" />,
  elastico: <><path d="M3 5.500H11" stroke="#b02030" strokeWidth="1.500" /><path d="M5 6V10M7 6V10M9 6V10" stroke="#16813a" strokeWidth="1.500" /></>,
  noLineal: <path d="M7 3V12" stroke="#333" strokeWidth="1.500" strokeDasharray="2 1" />,
  conjunto: <><path d="M3 11L9 4L11 11" stroke="#444" fill="none" /><Dot x={9} y={4} s={2} /><Dot x={6} y={8} s={2} /></>,
  inter: <><circle cx="7" cy="7.500" r="2.500" fill="#a8cdf2" stroke="#22406f" /><path d="M4 7.500H10M7 5V10" stroke="#22406f" /></>,
  refina: <path d="M4 4H11V11M4 4V11H8V7H11" fill="none" stroke="#31507e" strokeWidth="1.600" />,
  capas: <path d="M2 9L5 5L12 4L10 8ZM2 11L10 10L12 7" fill="#8ab8e8" stroke="#31507e" strokeWidth=".800" />,
  coaccion: <><path d="M4 5L10 11M10 5L4 11" stroke="#222" /><Dot x={4} y={5} s={2} /><Dot x={10} y={5} s={2} /><Dot x={4} y={11} s={2} /><Dot x={10} y={11} s={2} /></>,
};

const Folder = ({ mark }: any) => (
  <svg viewBox="0 0 14 13" className="h-[13px] w-3.5 shrink-0" fill="none" aria-hidden="true">
    <path d="M.500 2.500Q.500 1 2 1H5L6.500 2.500H13.500V12.500H.500Z" fill="#f0d850" stroke="#b59a30" />
    <path d="M1.500 3.500H12.500" stroke="#fbf0a0" />
    <path d="M13.500 3V12.500H1" stroke="#75621c" />
    {marks[mark]}
  </svg>
);

const OpenFolder = () => (
  <svg viewBox="0 0 15 13" className="h-[13px] w-[15px] shrink-0" aria-hidden="true">
    <path d="M2 1H7L8 2.500H14V12H3Z" fill="#8f780c" stroke="#6b5a10" />
    <path d="M.500 4.500H11.500L14.500 12.500H3Z" fill="#d9b91c" stroke="#a08820" />
  </svg>
);

const CaseIcon = () => (
  <svg viewBox="0 0 14 13" className="h-[13px] w-3.5 shrink-0" aria-hidden="true">
    <path d="M11 2V8" stroke="#3d63b8" strokeWidth="2.400" />
    <path d="M8.500 7H13.500L11 11Z" fill="#3d63b8" />
    <path d="M0 12H14" stroke="#333" strokeWidth="1.400" />
  </svg>
);

const ComboIcon = ({ c }: any) => (
  <svg viewBox="0 0 16 16" className="-ml-0.5 h-4 w-4 shrink-0 overflow-visible" aria-hidden="true"><Combo c={c} /></svg>
);

// [depth, label, icon, box]
const tree: [number, string, string, string?][] = [
  [1, 'Datos del modelo', 'open', '-'],
  [2, 'Nudos', 'punto', '+'],
  [2, 'Líneas', 'linea', '+'],
  [2, 'Materiales', 'materiales', '+'],
  [2, 'Superficies', 'superficie', '+'],
  [2, 'Sólidos', 'solido'],
  [2, 'Huecos', 'hueco'],
  [2, 'Apoyos en nudos', 'apoyo'],
  [2, 'Apoyos en línea', 'apoyoLinea', '+'],
  [2, 'Apoyos en superficie', 'apoyoSup'],
  [2, 'Articulaciones lineales', 'articulacion'],
  [2, 'Espesores variables', 'espesor'],
  [2, 'Superficies ortótropas y membranas', 'orto'],
  [2, 'Secciones', 'seccion'],
  [2, 'Articulaciones en barras', 'artBarra'],
  [2, 'Excentricidades de barra', 'exc'],
  [2, 'Divisiones de barra', 'division'],
  [2, 'Barras', 'barra'],
  [2, 'Nervios', 'nervio'],
  [2, 'Apoyos elásticos en barra', 'elastico'],
  [2, 'No linealidades de barra', 'noLineal'],
  [2, 'Conjuntos de barras', 'conjunto'],
  [2, 'Intersecciones de superficies', 'inter'],
  [2, 'Refinamientos de malla de EF', 'refina'],
  [2, 'Liberaciones de nudos', ''],
  [2, 'Tipos de liberaciones de líneas', ''],
  [2, 'Liberaciones de líneas', 'articulacion'],
  [2, 'Tipos de liberaciones de superficies', 'capas'],
  [2, 'Liberaciones de superficies', 'capas'],
  [2, 'Unión de dos barras', ''],
  [2, 'Uniones', ''],
  [2, 'Coacciones en nudo', 'coaccion'],
  [1, 'Casos de carga y combinaciones', 'open', '-'],
  [2, 'Casos de carga', 'caso', '+'],
  [2, 'Combinaciones de carga', 'comboVerde'],
  [2, 'Combinaciones de resultados', 'comboAzul'],
  [1, 'Cargas', '', '+'],
  [1, 'Resultados', '', '+'],
];

const nodeIcon = (icon: string) => {
  if (icon === 'open') return <OpenFolder />;
  if (icon === 'caso') return <CaseIcon />;
  if (icon === 'comboVerde') return <ComboIcon c="#22a045" />;
  if (icon === 'comboAzul') return <ComboIcon c="#4a8ef0" />;
  return <Folder mark={icon} />;
};

const TreeRow = ({ node, last }: any) => {
  const [depth, label, icon, box] = node;
  const x = depth === 2 ? 49 : 30;
  const dots = { stroke: '#808080', strokeDasharray: '1 1' };
  return (
    <li className="flex h-[18px] items-center whitespace-nowrap">
      <svg width={depth === 2 ? 62 : 42} height="18" className="shrink-0" aria-hidden="true">
        <path d="M11.500 0V18M30.500 0V18" {...dots} />
        {depth === 2 && <path d={last ? 'M49.500 0V10' : 'M49.500 0V18'} {...dots} />}
        <path d={`M${x + 1} 9.500H${x + 13}`} {...dots} />
        {box && (
          <g>
            <rect x={x - 3.5} y="5.500" width="8" height="8" rx="1" fill="#fff" stroke="#8b8f98" />
            <path d={box === '+' ? `M${x - 2} 9.500H${x + 3}M${x + 0.5} 7V12` : `M${x - 2} 9.500H${x + 3}`} stroke="#2b4a94" />
          </g>
        )}
      </svg>
      <span className={depth === 2 ? 'flex w-[14px]' : 'flex w-[15px]'}>{nodeIcon(icon)}</span>
      <span className="ml-[5px]">{label}</span>
    </li>
  );
};

const Chevron = ({ d, label }: any) => (
  <button aria-label={label} className="flex h-[15px] w-[15px] shrink-0 items-center justify-center">
    <svg viewBox="0 0 9 9" className="h-[9px] w-[9px]" fill="none" stroke="#505050" strokeWidth="1.800"><path d={d} /></svg>
  </button>
);

const Navigator = () => (
  <aside className="flex w-[313px] shrink-0 flex-col">
    <section className="flex min-h-0 flex-1 flex-col border-r border-b border-[#8f95a5] bg-[#eef1f9]">
      <header className="flex h-[19px] items-center border-b border-[#b4b8c4] bg-[#e6eaf5] pl-1 text-[11px] text-[#3f434c]">
        <h2>Navegador de proyectos - Datos</h2>
        <button aria-label="Fijar" className="ml-auto">
          <svg viewBox="0 0 9 9" className="h-[9px] w-[9px]" fill="none" stroke="#555"><path d="M2.500 6V.500H6.500V6M5.500 1V6M1 6H8M4.500 6V9" /></svg>
        </button>
        <button aria-label="Cerrar" className="mr-[5px] ml-2">
          <svg viewBox="0 0 9 9" className="h-[9px] w-[9px]" stroke="#555" strokeWidth="1.300"><path d="M1 1L8 8M8 1L1 8" /></svg>
        </button>
      </header>
      <div className="mt-[3px] mr-1 mb-px ml-[3px] flex min-h-0 flex-1 flex-col border-t border-l border-[#8a8e99] bg-[#f0f0f0]">
        <div className="flex min-h-0 flex-1">
          <ul className="min-h-0 flex-1 overflow-hidden bg-[#fcfbf3] pt-px text-[11px] text-black">
            {tree.map((node, i) => (
              <TreeRow key={node[1]} node={node} last={!tree[i + 1] || tree[i + 1][0] < node[0]} />
            ))}
          </ul>
          <div className="flex w-[15px] flex-col items-center py-0.5">
            <Chevron label="Subir" d="M1 6.500L4.500 3L8 6.500" />
            <div className="mt-4 h-[198px] w-[15px] bg-[#cdcdcd]" />
            <div className="flex-1" />
            <Chevron label="Bajar" d="M1 2.500L4.500 6L8 2.500" />
          </div>
        </div>
        <div className="flex h-4 items-center pr-4">
          <Chevron label="Izquierda" d="M6.500 1L3 4.500L6.500 8" />
          <div className="ml-0.5 h-[15px] w-[113px] bg-[#cdcdcd]" />
          <div className="flex-1" />
          <Chevron label="Derecha" d="M2.500 1L6 4.500L2.500 8" />
        </div>
      </div>
    </section>
    <nav className="flex h-[23px] items-center gap-0.5 pl-[3px] text-[11px] text-[#3f434c]">
      <button className="flex h-[19px] items-center gap-0.5 rounded-b border border-[#dfe6ea] bg-[#f1f3f8] pr-1 pl-0.5">
        <svg viewBox="0 0 16 16" className="h-4 w-4" fill="none" aria-hidden="true">
          <rect x="2.500" y="1.500" width="13" height="9" fill="#fff" stroke="#4a7fe0" /><path d="M2 2.500H16" stroke="#4a7fe0" strokeWidth="3" />
          <path d="M0 5H4L5 6H9V13H0Z" fill="#f0c63c" stroke="#a8801c" strokeWidth=".600" />
          <circle cx="9" cy="9" r="3.400" fill="#d7e8fb" stroke="#33528a" strokeWidth="1.300" /><path d="M11.500 12L14.500 15.500" stroke="#6b4a2a" strokeWidth="2" />
        </svg>
        Datos
      </button>
      <button className="flex h-[19px] items-center gap-0.5 px-1">
        <svg viewBox="0 0 16 16" className="h-4 w-4" fill="none" aria-hidden="true">
          <rect x="1.500" y="4.500" width="12" height="11" fill="#eef4ff" stroke="#2c57b5" /><path d="M2 5.500H13" stroke="#2c57b5" strokeWidth="2" />
          <path d="M4 8.500H11M4 10.500H11M4 12.500H11" stroke="#5479c9" />
          <path d="M4 3L8 .500H13L16 3L11 6L6 5Z" fill="#c09070" stroke="#5a3d28" strokeWidth=".700" />
        </svg>
        Mostrar
      </button>
      <button className="flex h-[19px] items-center gap-0.5 px-1">
        <svg viewBox="0 0 16 16" className="h-4 w-4" fill="none" aria-hidden="true">
          <path d="M3 11L9 2L12 4L8 12Z" fill="#6a8be0" stroke="#2f4790" /><path d="M5 10L10 4" stroke="#dfe8ff" />
          <path d="M11.500 3V13M1 14H14" stroke="#4c64b4" strokeWidth="1.800" />
        </svg>
        Vistas
      </button>
    </nav>
  </aside>
);

/* ---------- 3D model ---------- */

type P = [number, number];
const STEP: P = [61.6, -30.3];
const at = (p: P, i: number): P => [p[0] + STEP[0] * i, p[1] + STEP[1] * i];
const lerp = (a: P, b: P, t: number): P => [a[0] + (b[0] - a[0]) * t, a[1] + (b[1] - a[1]) * t];

// front frame: eaves, mid-rafters and ridge
const NODES: P[] = [[439, 463], [533, 462], [628, 460], [722, 502], [817, 542]];
const HEIGHT = 129;

const Seg = ({ a, b, ...rest }: any) => <line x1={a[0]} y1={a[1]} x2={b[0]} y2={b[1]} {...rest} />;

const Base = ({ p }: { p: P }) => (
  <g transform={`translate(${p[0]} ${p[1]})`}>
    <path d="M-2 0H2L2.500 3L6 5.500H2L0 8L-2 5.500H-6L-2.500 3Z" fill="#3ee84a" stroke="#2cc03a" strokeWidth=".600" />
    <Dot x={-1} y={-1} s={3} c="#6b1010" />
  </g>
);

const Column = ({ p }: { p: P }) => {
  const bottom = p[1] + HEIGHT;
  return (
    <g>
      <rect x={p[0] - 6} y={p[1]} width="12" height={HEIGHT} fill="#74abff" />
      <path d={`M${p[0] - 5.5} ${p[1]}V${bottom}M${p[0] + 4.5} ${p[1]}V${bottom}`} stroke="#5f97f0" />
      <Base p={[p[0], bottom]} />
    </g>
  );
};

const Post = ({ p, h }: { p: P; h: number }) => (
  <g>
    <rect x={p[0] - 3} y={p[1] + 3} width="6" height={h} fill="#ff0000" />
    <path d={`M${p[0] - 2.5} ${p[1] + 3}v${h}M${p[0] + 2.5} ${p[1] + 3}v${h}`} stroke="#e00000" />
    <Base p={[p[0], p[1] + h + 3]} />
  </g>
);

const Beam = ({ a, b, gable, flip }: any) => {
  const edge = { stroke: '#77735c', strokeDasharray: '1 1' };
  const t = (v: number) => lerp(a, b, flip ? 1 - v : v);
  const off = (p: P, d: number): P => [p[0], p[1] + d];
  const half = flip ? 5 : 4;
  return (
    <g>
      <Seg a={a} b={b} stroke={gable ? '#9490fa' : '#ffd800'} strokeWidth="8" />
      {!gable && (
        <g>
          <Seg a={t(0.18)} b={t(0)} stroke="#f5bd10" strokeWidth="8" />
          <Seg a={t(0.09)} b={t(0)} stroke="#00f040" strokeWidth="9" />
        </g>
      )}
      <Seg a={off(a, -half)} b={off(b, -half)} {...edge} />
      <Seg a={off(a, half)} b={off(b, half)} {...edge} />
      {!gable && <Dot x={t(0.18)[0]} y={t(0.18)[1]} s={3} c="#8a2c10" />}
    </g>
  );
};

const Frame = ({ i }: { i: number }) => {
  const n = NODES.map((p) => at(p, i));
  const gable = i === 0 || i === 6;
  const brace = { stroke: '#5f7a45', strokeWidth: 0.8 };
  const down = (p: P, d: number): P => [p[0], p[1] + d];
  const bays = i === 6 || i === 1 ? NODES.map((p) => at(p, i - 1)) : null;
  return (
    <g>
      <Column p={n[0]} />
      <Column p={n[4]} />
      {gable && <Post p={n[1]} h={147} />}
      {gable && <Post p={n[2]} h={170} />}
      {gable && <Post p={n[3]} h={147} />}
      {bays &&
        [0, 4].map((k) => (
          <g key={k}>
            <Seg a={down(bays[k], 5)} b={down(n[k], HEIGHT)} {...brace} />
            <Seg a={n[k]} b={down(bays[k], 112)} {...brace} />
          </g>
        ))}
      {bays &&
        [0, 1, 2, 3].map((k) => (
          <g key={k}>
            <Seg a={bays[k]} b={n[k + 1]} {...brace} />
            <Seg a={n[k]} b={bays[k + 1]} {...brace} />
          </g>
        ))}
      <Beam a={[n[0][0] + 4, n[0][1]]} b={n[2]} gable={gable} />
      <Beam a={n[2]} b={[n[4][0] - 3, n[4][1] - 1]} gable={gable} flip />
      {i > 0 &&
        n.map((p, k) => (
          <g key={k}>
            <Seg a={p} b={at(p, -1)} stroke="#5d3a12" strokeWidth="2.200" />
            <Seg a={p} b={at(p, -1)} stroke="#a8793c" strokeWidth=".700" />
          </g>
        ))}
      {n.map((p, k) => (
        <Dot key={k} x={p[0]} y={p[1]} s={3} c="#7a1c14" />
      ))}
      {gable &&
        [1, 2, 3].map((k) => (
          <circle key={k} cx={n[k][0]} cy={n[k][1] + 4} r="2.500" fill="#fff" stroke="#0d7a80" />
        ))}
    </g>
  );
};

const Triad = ({ o, x, y, z, labels }: any) => (
  <g fontSize="10" fontFamily="Liberation Sans, sans-serif">
    <Seg a={o} b={x} stroke="#ff0000" strokeWidth="1.600" />
    <Seg a={o} b={y} stroke="#00e820" strokeWidth="1.600" />
    <Seg a={o} b={z} stroke="#0000ff" strokeWidth="1.600" />
    <path transform={`translate(${x[0]} ${x[1]}) rotate(11)`} d="M2 0L-8 -3V3Z" fill="#c80000" />
    <path
      transform={`translate(${y[0]} ${y[1]}) rotate(${(Math.atan2(y[1] - o[1], y[0] - o[0]) * 180) / Math.PI})`}
      d="M2 0L-7 -3V3Z"
      fill="#00b418"
    />
    <path transform={`translate(${z[0]} ${z[1]})`} d="M0 2L-3 -8H3Z" fill="#0000b8" />
    <text x={labels[0][0]} y={labels[0][1]} fill="#d01010">X</text>
    <text x={labels[1][0]} y={labels[1][1]} fill="#00d820">Y</text>
    <text x={labels[2][0]} y={labels[2][1]} fill="#0000e0">Z</text>
  </g>
);

const Model = () => (
  <main className="min-w-0 flex-1 border-t border-l border-[#6a6a6a] bg-white">
    <svg viewBox="320 135 1060 734" className="block h-full w-full" role="img" aria-label="Modelo 3D">
      {[6, 5, 4, 3, 2, 1, 0].map((i) => (
        <Frame key={i} i={i} />
      ))}
      <Triad o={[809, 410]} x={[842, 416]} y={[789, 419]} z={[809, 446]} labels={[[848, 422], [779, 427], [806, 461]]} />
      <Triad o={[375, 755]} x={[413, 762]} y={[363, 779]} z={[375, 786]} labels={[[420, 768], [357, 789], [372, 798]]} />
    </svg>
  </main>
);

/* ---------- status bar ---------- */

const StatusBar = () => (
  <footer className="flex h-[22px] items-center border-t border-[#a3a7b5] bg-linear-to-b from-[#dfe1e8] via-[#a9aeb8] to-[#b9bcc2] font-[Roboto,sans-serif] text-xs text-[#26282e]">
    <div className="flex flex-1 items-center justify-end gap-0.5">
      {['FORZC', 'REJILLA', 'CARTES', 'REFENT', 'GLN', 'DXF'].map((s) => (
        <button
          key={s}
          className={
            s === 'REFENT'
              ? 'h-[18px] border border-t-white border-r-[#8a8d94] border-b-[#8a8d94] border-l-white px-px leading-4'
              : 'h-[18px] border border-t-black border-r-white border-b-white border-l-black px-px leading-4'
          }
        >
          {s}
        </button>
      ))}
    </div>
    <div className="flex h-[18px] w-[517px] justify-end">
      <span className="w-[88px] border-l border-[#8f939b]" />
      <span className="w-[74px] border-l border-[#8f939b]" />
      <span className="w-[74px] border-l border-[#8f939b]" />
      <span className="flex w-[91px] items-end justify-end border-l border-[#8f939b]">
        <svg viewBox="0 0 12 12" className="h-3 w-3" fill="#5f6570" aria-hidden="true">
          <path d="M8 0h2v2h-2zM4 4h2v2h-2zM8 4h2v2h-2zM0 8h2v2h-2zM4 8h2v2h-2zM8 8h2v2h-2z" />
        </svg>
      </span>
    </div>
  </footer>
);

export default function App() {
  return (
    <div className="flex h-screen flex-col border border-[#6b6b6b] bg-[#ced3dc] font-['Noto_Sans',sans-serif]">
      <TitleBar />
      <MenuBar />
      <div className="relative flex flex-col gap-px">
        <div className="flex gap-[3px] pr-px">
          <Toolbar>
            <Tools items="nuevo abrir cajonMarron cajonAzul guardar informe imprimir previa | deshacer rehacer | selPlano selElipse selAnillo selMasMenos selVentana | navegador:on tabla | nuevoCaso" />
            <div className="relative mx-0.5 flex h-[19px] w-[216px] items-center bg-white">
              <select aria-label="Caso de carga" className="w-full appearance-none pl-1 text-[11px] text-black">
                <option>CC1</option>
              </select>
              <span className="pointer-events-none absolute inset-y-0 right-0 flex w-3.5 items-center justify-center border border-[#c3c8d3] bg-[#e6e9f1]">
                <svg viewBox="0 0 6 4" className="h-1 w-1.5" aria-hidden="true"><path d="M0 0H6L3 3.500Z" fill="#6c7078" /></svg>
              </span>
            </div>
            <Tools items="anterior siguiente verCarga valorCarga verResultado valorResultado | gafas calcTodo calc" />
          </Toolbar>
          <div className="flex-1" />
          <Toolbar>
            <Tools items="flechaAzul1 flechaAzul2 pdfBajar pdfSubir" />
          </Toolbar>
          <Toolbar>
            <Tools items="rejillaMano rejillaMira plano1:on plano2 plano3 malla lineasVentana | mover girar simetria nodos info ajustes engranajes" />
          </Toolbar>
        </div>
        <div className="flex justify-end gap-[3px] pr-px">
          <Toolbar>
            <Tools items="portico camara | resBarras isosuperficie isosolido reacciones secciones escala:v deformada panelValores | listaColor varita:v colores:v" />
          </Toolbar>
          <Toolbar>
            <Tools items="manoZoom zoomVentana zoomTodo cubo cubos | ejeX ejeY ejeZ ejeMenosY:v microscopio:v | perfil3d:v" />
          </Toolbar>
        </div>
        <div className="flex justify-end pr-[190px]">
          <Toolbar>
            <Tools items="nudo:v linea barra:v arco:v | apoyoNudo apoyoLinea apoyoSuperficie | cota:v comentario lineaGuia | superficie:v seleccionar:v interseccion:v solido solidos:v | combinacion:v cargaNudo cargaLinea cargaBarra cargaSuperficie cargaSolido:v" />
          </Toolbar>
        </div>
        <svg
          viewBox="0 0 192 40"
          className="absolute top-[31px] left-[310px] h-10 w-48 overflow-visible drop-shadow-[4px_5px_3px_rgba(0,0,0,0.45)]"
          aria-hidden="true"
        >
          <path d="M0 15.500H154V1L190 18.500L154 36V22.500H0Z" fill="#ff0000" />
        </svg>
      </div>
      <div className="flex min-h-0 flex-1 gap-[5px]">
        <Navigator />
        <Model />
      </div>
      <StatusBar />
    </div>
  );
}
